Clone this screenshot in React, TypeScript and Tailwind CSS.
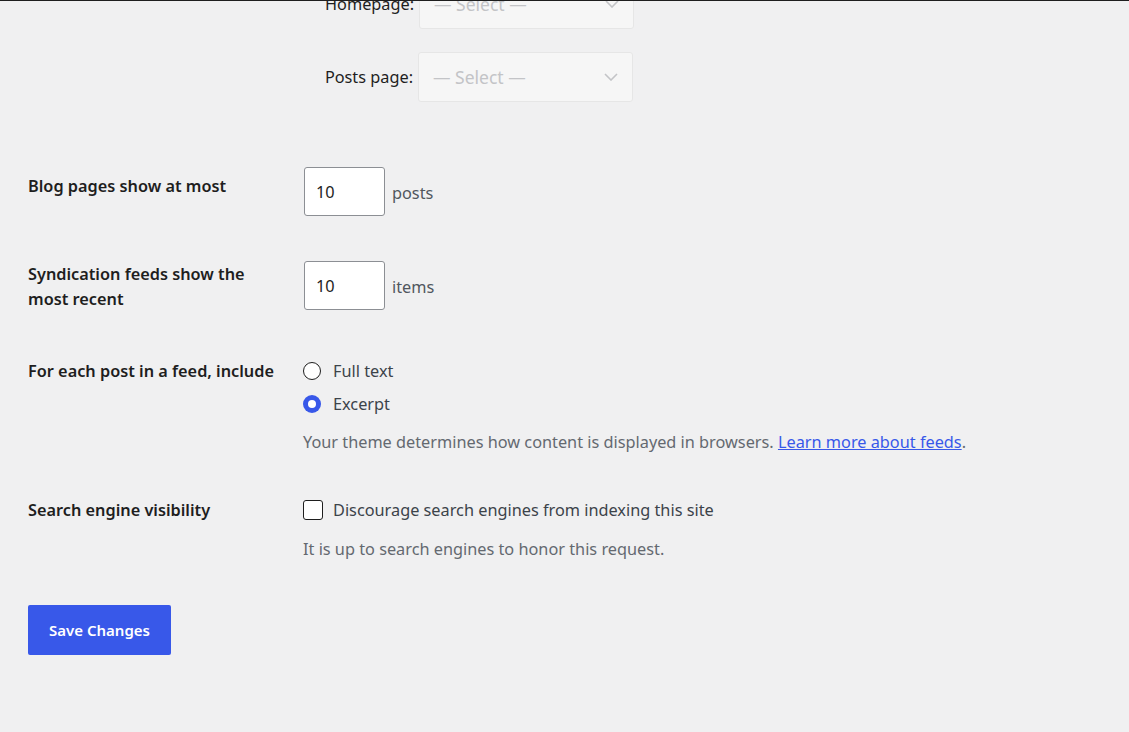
import React from "react";

const font = { fontFamily: '"Noto Sans", "Open Sans", sans-serif' };

function Chevron() {
  return (
    <svg width="14" height="8" viewBox="0 0 14 8" fill="none">
      <path d="M1 1l6 6 6-6" stroke="#c3c4c7" strokeWidth="1.6" />
    </svg>
  );
}

function Select() {
  return (
    <div className="flex h-[50px] w-[215px] items-center justify-between rounded-[3px] border border-[#e6e6e6] bg-[#f6f6f6] pl-[14px] pr-[14px]">
      <span className="text-[17.5px] text-[#c3c4c7]">— Select —</span>
      <Chevron />
    </div>
  );
}

function NumberBox() {
  return (
    <div className="flex h-[49px] w-[81px] items-center rounded-[3px] border border-[#8c8f94] bg-white pl-[11px] text-[16.3px] text-[#1e1e1e]">
      10
    </div>
  );
}

export default function App() {
  return (
    <div className="flex h-screen w-full flex-col overflow-hidden bg-[#f0f0f1] text-[#1e1e1e]" style={font}>
      <div className="h-px w-full shrink-0 bg-[#1e1e1e]" />
      <div className="flex-1 overflow-hidden px-[28px] text-[16.3px] leading-[24px]">
        <div className="-mt-[22px] ml-[297px] flex items-center gap-[8px]">
          <span className="w-[86px] text-right">Homepage:</span>
          <Select />
        </div>
        <div className="mt-[23px] ml-[296px] flex items-center gap-[5px]">
          <span className="w-[89px] text-right">Posts page:</span>
          <Select />
        </div>

        <div className="mt-[65px] flex items-start">
          <div className="mt-[7px] w-[276px] font-semibold">Blog pages show at most</div>
          <div className="flex items-center gap-[7px]">
            <NumberBox />
            <span className="mt-[3px] text-[#50575e]">posts</span>
          </div>
        </div>

        <div className="mt-[45px] flex items-start">
          <div className="mt-[1px] w-[276px] pr-[30px] font-semibold leading-[25px]">
            Syndication feeds show the most recent
          </div>
          <div className="flex items-center gap-[7px]">
            <NumberBox />
            <span className="mt-[3px] text-[#50575e]">items</span>
          </div>
        </div>

        <div className="mt-[47px] flex items-start">
          <div className="w-[275px] font-semibold">For each post in a feed, include</div>
          <div className="flex flex-col">
            <div className="flex items-center gap-[12px]">
              <span className="block h-[18px] w-[18px] rounded-full border border-[#1e1e1e] bg-white" />
              <span className="text-[#3c434a]">Full text</span>
            </div>
            <div className="mt-[9px] flex items-center gap-[12px]">
              <span className="flex h-[18px] w-[18px] items-center justify-center rounded-full bg-[#3858e9]">
                <span className="block h-[8px] w-[8px] rounded-full bg-white" />
              </span>
              <span className="text-[#3c434a]">Excerpt</span>
            </div>
            <p className="mt-[14px] text-[#646970]">
              Your theme determines how content is displayed in browsers.{" "}
              <a href="#" className="text-[#3858e9] underline">Learn more about feeds</a>.
            </p>
          </div>
        </div>

        <div className="mt-[44px] flex items-start">
          <div className="w-[275px] font-semibold">Search engine visibility</div>
          <div className="flex flex-col">
            <div className="flex items-center gap-[10px]">
              <span className="block h-[20px] w-[20px] rounded-[3px] border border-[#1e1e1e] bg-white" />
              <span className="text-[#3c434a]">Discourage search engines from indexing this site</span>
            </div>
            <p className="mt-[15px] text-[#646970]">It is up to search engines to honor this request.</p>
          </div>
        </div>

        <button className="mt-[44px] flex h-[50px] w-[143px] items-center justify-center rounded-[2px] bg-[#3858e9] text-[15px] font-semibold text-white">
          Save Changes
        </button>
      </div>
    </div>
  );
}
